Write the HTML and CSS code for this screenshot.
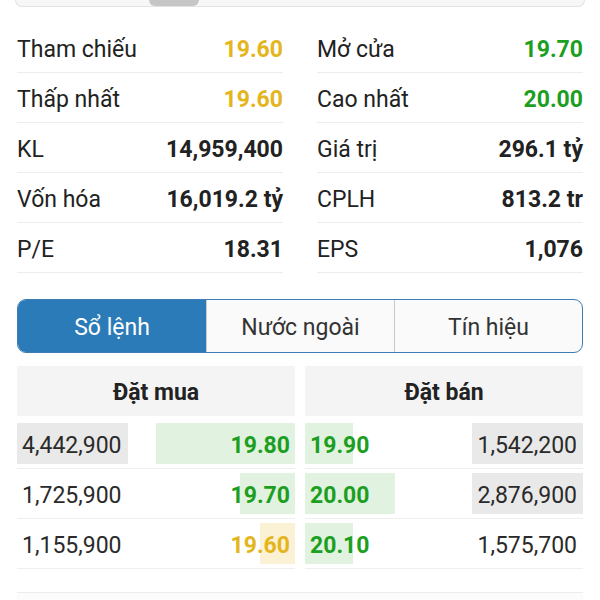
FILE: index.html
```html
<!DOCTYPE html>
<html lang="vi">
<head>
  <meta charset="UTF-8">
  <title>Chi tiết cổ phiếu</title>
  <link rel="stylesheet" href="styles.css">
</head>
<body>
<div class="top_card">
  <div class="handle"></div>
</div>

<div class="stats">
  <div class="stat"><span>Tham chiếu</span><b class="ref">19.60</b></div>
  <div class="stat"><span>Mở cửa</span><b class="up">19.70</b></div>
  <div class="stat"><span>Thấp nhất</span><b class="ref">19.60</b></div>
  <div class="stat"><span>Cao nhất</span><b class="up">20.00</b></div>
  <div class="stat"><span>KL</span><b>14,959,400</b></div>
  <div class="stat"><span>Giá trị</span><b>296.1 tỷ</b></div>
  <div class="stat"><span>Vốn hóa</span><b>16,019.2 tỷ</b></div>
  <div class="stat"><span>CPLH</span><b>813.2 tr</b></div>
  <div class="stat"><span>P/E</span><b>18.31</b></div>
  <div class="stat"><span>EPS</span><b>1,076</b></div>
</div>

<div class="tabs">
  <div class="tab active">Sổ lệnh</div>
  <div class="tab">Nước ngoài</div>
  <div class="tab">Tín hiệu</div>
</div>

<div class="book">
  <div class="side">
    <div class="side_head">Đặt mua</div>
    <div class="order">
      <div class="vol bar_left" style="--w:111px">4,442,900</div>
      <div class="price up bar_right" style="--w:139px">19.80</div>
    </div>
    <div class="order">
      <div class="vol">1,725,900</div>
      <div class="price up bar_right" style="--w:55px">19.70</div>
    </div>
    <div class="order">
      <div class="vol">1,155,900</div>
      <div class="price ref bar_right" style="--w:35px">19.60</div>
    </div>
  </div>
  <div class="side sell">
    <div class="side_head">Đặt bán</div>
    <div class="order">
      <div class="price up bar_left" style="--w:48px">19.90</div>
      <div class="vol bar_right" style="--w:111px">1,542,200</div>
    </div>
    <div class="order">
      <div class="price up bar_left" style="--w:90px">20.00</div>
      <div class="vol bar_right" style="--w:111px">2,876,900</div>
    </div>
    <div class="order">
      <div class="price up bar_left" style="--w:48px">20.10</div>
      <div class="vol">1,575,700</div>
    </div>
  </div>
</div>

<div class="next_section"></div>
</body>
</html>
```

FILE: styles.css
```css
body {
  margin: 0;
  background: #fff;
  font-family: Roboto, "Noto Sans", "Liberation Sans", sans-serif;
  color: #222;
}

/* phần đáy của thẻ phía trên */
.top_card {
  display: flex;
  height: 6px;
  margin: 0 15px;
  border: 1px solid #e3e3e3;
  border-top: none;
  border-radius: 0 0 10px 10px;
  background: #f7f7f7;
}
.handle {
  width: 50px;
  height: 6px;
  margin-left: 133px;
  border-radius: 0 0 9px 9px;
  background: #c6c6c6;
}

/* bảng thông số */
.stats {
  display: grid;
  grid-template-columns: 1fr 1fr;
  column-gap: 34px;
  margin-top: 16px;
  padding: 0 17px;
}
.stat {
  display: flex;
  justify-content: space-between;
  align-items: center;
  height: 45px;
  padding-top: 4px;
  border-bottom: 1px solid #ededed;
  font-size: 23px;
}
.stat b {
  font-weight: 700;
  color: #222;
}
.stat b.ref, .ref {
  color: #e4b51c;
}
.stat b.up, .up {
  color: #1c9e1f;
}

/* tabs */
.tabs {
  display: grid;
  grid-template-columns: 1fr 1fr 1fr;
  height: 52px;
  margin: 26px 17px 0;
  border: 1.5px solid #3b7db3;
  border-radius: 9px;
  overflow: hidden;
  background: #fafafa;
}
.tab {
  display: flex;
  justify-content: center;
  align-items: center;
  padding-top: 2px;
  font-size: 23px;
  color: #333;
  border-left: 1px solid #c9c9c9;
}
.tab:first-child {
  border-left: none;
}
.tab.active {
  background: #2b7bb9;
  color: #fff;
}

/* sổ lệnh */
.book {
  display: grid;
  grid-template-columns: 1fr 1fr;
  column-gap: 10px;
  margin-top: 13px;
  padding: 0 17px;
}
.side_head {
  display: flex;
  justify-content: center;
  align-items: center;
  height: 48px;
  padding-top: 2px;
  margin-bottom: 3px;
  background: #f4f4f4;
  font-size: 23px;
  font-weight: 700;
}
.order {
  display: grid;
  grid-template-columns: 1fr 1fr;
  height: 41px;
  padding: 4px 0;
  border-bottom: 1px solid #efefef;
  font-size: 23px;
}
.order > div {
  display: flex;
  align-items: center;
  padding-top: 3px;
}
.vol {
  color: #2a2a2a;
}
.price {
  font-weight: 700;
}
.side .vol {
  padding-left: 5px;
}
.side .price {
  justify-content: flex-end;
  padding-right: 5px;
}
.sell .price {
  justify-content: flex-start;
  padding-left: 5px;
  padding-right: 0;
}
.sell .vol {
  justify-content: flex-end;
  padding-left: 0;
  padding-right: 6px;
}

.vol.bar_left, .vol.bar_right {
  --bar: #e9e9e9;
}
.price.up {
  --bar: #e1f2e1;
}
.price.ref {
  --bar: #fbf2d6;
}
.bar_left {
  background: linear-gradient(to right, var(--bar) var(--w), transparent var(--w));
}
.bar_right {
  background: linear-gradient(to left, var(--bar) var(--w), transparent var(--w));
}

.next_section {
  height: 20px;
  margin: 23px 17px 0;
  border-top: 1px solid #ececec;
  background: #fcfcfc;
}
```
